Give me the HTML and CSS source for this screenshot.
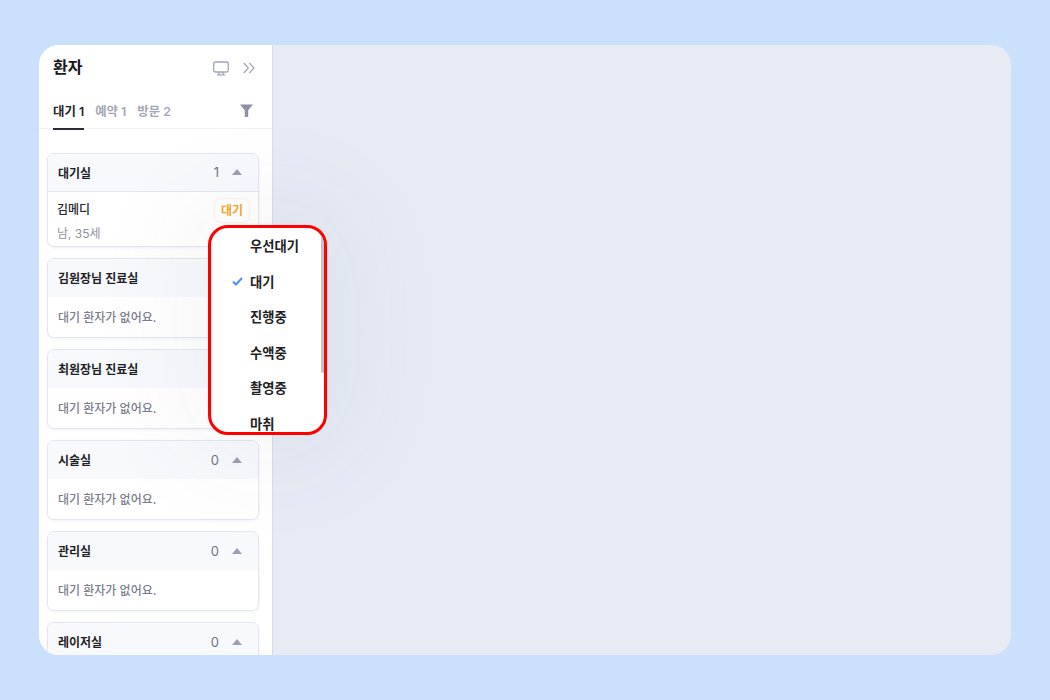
FILE: index.html
```html
<!DOCTYPE html>
<html lang="ko">
<head>
<meta charset="utf-8">
<title>환자</title>
<link rel="stylesheet" href="styles.css">
</head>
<body>
<div class="frame">
  <aside class="panel">
    <header class="panel-head">
      <h1 class="title">환자</h1>
      <div class="head-icons">
        <svg class="icon-monitor" width="16" height="15" viewBox="0 0 16 15" fill="none" stroke="#a3a5b8" stroke-width="1.3"><rect x=".7" y="1" width="14.6" height="10" rx="1.8"/><path d="M6 11v2.6M10 11v2.6M4 13.8h8"/></svg>
        <svg class="icon-chev" width="12" height="12" viewBox="0 0 12 12" fill="none" stroke="#a3a5b8" stroke-width="1.2"><path d="M.7 1l4.7 5-4.7 5M6.3 1L11 6l-4.7 5"/></svg>
      </div>
    </header>
    <nav class="tabs">
      <span class="tab active">대기 1</span>
      <span class="tab">예약 1</span>
      <span class="tab">방문 2</span>
      <svg class="icon-filter" width="13" height="13" viewBox="0 0 13 13" fill="#8f90a3"><path d="M0 .5h13L8.2 6.3V13H4.8V6.3z"/></svg>
    </nav>
    <div class="list">
      <section class="card">
        <div class="card-head bordered"><span class="room">대기실</span><span class="count">1</span><i class="caret"></i></div>
        <div class="patient">
          <div class="patient-info"><span class="name">김메디</span><span class="meta">남, 35세</span></div>
          <span class="badge">대기</span>
        </div>
      </section>
      <section class="card">
        <div class="card-head"><span class="room">김원장님 진료실</span><span class="count">0</span><i class="caret"></i></div>
        <p class="empty">대기 환자가 없어요.</p>
      </section>
      <section class="card">
        <div class="card-head"><span class="room">최원장님 진료실</span><span class="count">0</span><i class="caret"></i></div>
        <p class="empty">대기 환자가 없어요.</p>
      </section>
      <section class="card">
        <div class="card-head"><span class="room">시술실</span><span class="count">0</span><i class="caret"></i></div>
        <p class="empty">대기 환자가 없어요.</p>
      </section>
      <section class="card">
        <div class="card-head"><span class="room">관리실</span><span class="count">0</span><i class="caret"></i></div>
        <p class="empty">대기 환자가 없어요.</p>
      </section>
      <section class="card">
        <div class="card-head"><span class="room">레이저실</span><span class="count">0</span><i class="caret"></i></div>
      </section>
    </div>
  </aside>
  <main class="main"></main>
  <div class="menu">
    <ul class="menu-list">
      <li class="menu-item">우선대기</li>
      <li class="menu-item"><svg class="check" width="11" height="9" viewBox="0 0 11 9" fill="none" stroke="#4f8ff7" stroke-width="2"><path d="M1 4.5l3 3L10 1"/></svg>대기</li>
      <li class="menu-item">진행중</li>
      <li class="menu-item">수액중</li>
      <li class="menu-item">촬영중</li>
      <li class="menu-item">마취</li>
    </ul>
    <span class="scrollbar"></span>
  </div>
</div>
</body>
</html>
```
FILE: styles.css
```css
* { box-sizing: border-box; }
html, body { margin: 0; height: 100%; }
body {
  background: #cbe1fb;
  padding: 45px 39px;
  font-family: Inter, "Noto Sans CJK KR", sans-serif;
  overflow: hidden;
}
.frame {
  position: relative;
  display: flex;
  width: 972px;
  height: 610px;
  border-radius: 20px;
  overflow: hidden;
  background: #e7ebf4;
}
.panel {
  width: 234px;
  flex: none;
  background: #fff;
  border-right: 1px solid #d9dde9;
  display: flex;
  flex-direction: column;
  overflow: hidden;
}
.panel-head {
  display: flex;
  align-items: center;
  justify-content: space-between;
  padding: 0 17px 0 14px;
  height: 46px;
  flex: none;
}
.title { margin: 0 0 2px; font-size: 16px; font-weight: 700; line-height: 22px; color: #17171c; }
.head-icons { display: flex; align-items: center; gap: 14px; }
.head-icons svg { display: block; }
.tabs {
  display: flex;
  align-items: flex-start;
  gap: 11px;
  height: 38px;
  flex: none;
  padding: 0 19px 0 14px;
  border-bottom: 1px solid #f0f1f5;
}
.tab {
  position: relative;
  font-size: 12.4px;
  font-weight: 600;
  color: #a5a6b5;
  line-height: 42px;
  height: 38px;
}
.tab.active { color: #232329; }
.tab.active::after {
  content: "";
  position: absolute;
  left: 0; right: 0; bottom: -1px;
  height: 2px;
  background: #2b2b33;
}
.icon-filter { margin-left: auto; margin-top: 13px; }
.list {
  padding: 24px 12px 0 8px;
  display: flex;
  flex-direction: column;
  gap: 11px;
}
.card {
  flex: none;
  width: 212px;
  border: 1px solid #e4e6ef;
  border-radius: 7px;
  background: #fff;
  box-shadow: 0 1px 3px rgba(60, 65, 100, .07);
  overflow: hidden;
}
.card-head {
  display: flex;
  align-items: center;
  height: 38px;
  padding: 0 16px 1px 10px;
  background: #f8f9fd;
}
.card-head.bordered { border-bottom: 1px solid #e4e6ef; }
.room { flex: 1; font-size: 12px; font-weight: 600; color: #1e1e24; }
.count { font-size: 13px; color: #72737f; margin-right: 13px; }
.caret {
  width: 0; height: 0;
  border-left: 5px solid transparent;
  border-right: 5px solid transparent;
  border-bottom: 6px solid #9d9eb3;
}
.patient {
  display: flex;
  justify-content: space-between;
  align-items: flex-start;
  height: 54px;
  padding: 5px 8px 0 9px;
}
.patient-info { display: flex; flex-direction: column; padding-top: 5px; gap: 7px; }
.name { font-size: 12px; font-weight: 500; color: #26262c; line-height: 16px; }
.meta { font-size: 12px; color: #8f909e; line-height: 18px; }
.badge {
  font-size: 12px;
  font-weight: 600;
  color: #f8a625;
  border: 1px solid #fdf3e4;
  border-radius: 6px;
  padding: 0 6px;
  margin-top: 1px;
  line-height: 23px;
}
.empty {
  margin: 0;
  height: 40px;
  padding-left: 10px;
  font-size: 12px;
  font-weight: 500;
  line-height: 41px;
  color: #7c7d8b;
}
.main { flex: 1; }
.menu {
  position: absolute;
  left: 169px;
  top: 180px;
  width: 119px;
  height: 210px;
  background: #fff;
  border: 3px solid #f00;
  border-radius: 20px;
  overflow: hidden;
  box-shadow: 0 0 100px 30px rgba(70, 75, 110, .05);
}
.menu-list {
  list-style: none;
  margin: 0;
  padding: 0 0 0 39px;
}
.menu-item {
  position: relative;
  font-size: 13.3px;
  font-weight: 600;
  color: #1e1e24;
  height: 35.5px;
  line-height: 36px;
}
.check { position: absolute; left: -18px; top: 13px; }
.scrollbar {
  position: absolute;
  right: 0;
  top: 7px;
  width: 3px;
  height: 138px;
  border-radius: 2px;
  background: #c3c4cc;
}
```
